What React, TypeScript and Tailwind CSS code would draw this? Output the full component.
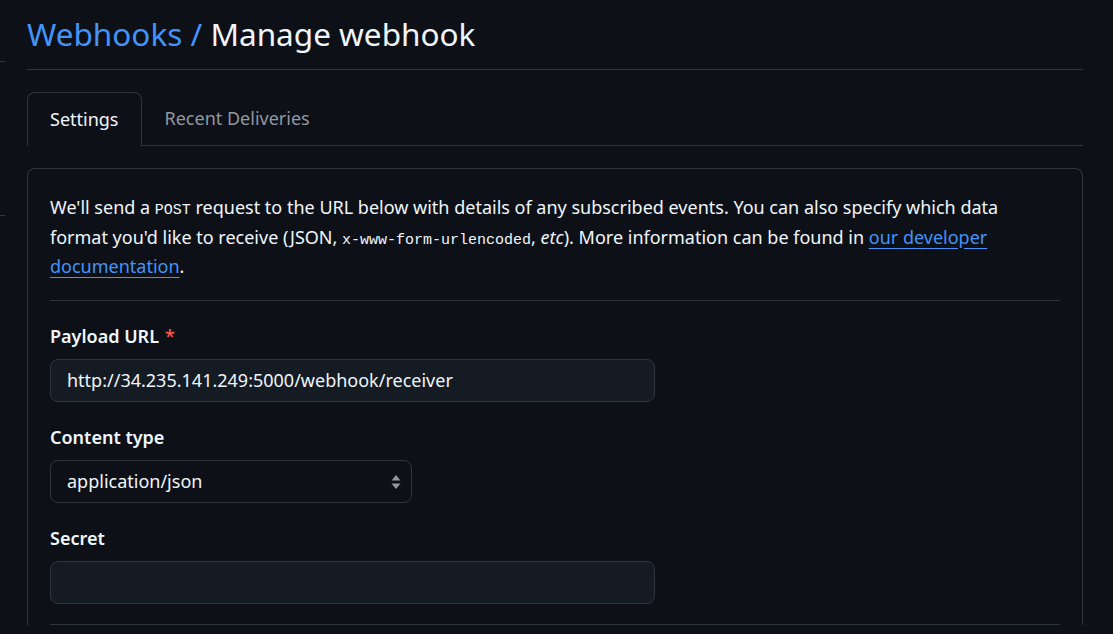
import { useState } from 'react';

function Field({ label, required, children }: { label: string; required?: boolean; children: React.ReactNode }) {
  return (
    <div className="flex flex-col">
      <label className="text-[18px] font-semibold leading-[26px] text-[#f0f6fc]">
        {label}
        {required && <span className="ml-[6px] text-[#f85149]">*</span>}
      </label>
      <div className="mt-[10px]">{children}</div>
    </div>
  );
}

function App() {
  const [url, setUrl] = useState('http://34.235.141.249:5000/webhook/receiver');
  const [secret, setSecret] = useState('');

  return (
    <div className="relative min-h-screen w-full bg-[#0d1117] font-['Noto_Sans',sans-serif] text-[#f0f6fc]">
      {/* leftover sidebar edges */}
      <div className="absolute left-0 top-[61px] h-px w-[5px] bg-[#30363d]" />
      <div className="absolute left-0 top-[215px] h-px w-[5px] bg-[#30363d]" />

      <div className="ml-[27px] w-[1056px]">
        <h1 className="border-b border-[#30363d] pb-[13px] pt-[12px] text-[31.5px] font-normal leading-[44px]">
          <a className="text-[#4493f8]">Webhooks</a>
          <span className="text-[#4493f8]"> / </span>
          Manage webhook
        </h1>

        <div className="mt-[22px] flex border-b border-[#30363d]">
          <div className="-mb-px flex h-[54px] items-center rounded-t-[8px] border border-b-0 border-[#30363d] bg-[#0d1117] px-[22px] text-[18px] text-[#f0f6fc]">
            Settings
          </div>
          <div className="flex h-[53px] items-center px-[23px] text-[18px] text-[#9198a1]">Recent Deliveries</div>
        </div>

        <div className="mt-[22px] rounded-t-[8px] border border-b-0 border-[#30363d] px-[22px] pt-[24px]">
          <p className="text-[18px] leading-[29.5px] text-[#f0f6fc]">
            We'll send a <span className="font-['Liberation_Mono',monospace] text-[15px] leading-none">POST</span> request to the URL below with details of any subscribed events. You can also specify which data format you'd like to receive (JSON,{' '}
            <span className="font-['Liberation_Mono',monospace] text-[15px] leading-none">x-www-form-urlencoded</span>, <em className="leading-none">etc</em>). More information can be found in{' '}
            <a className="text-[#4493f8] underline underline-offset-[4px]">our developer documentation</a>.
          </p>

          <div className="mt-[18px] border-t border-[#30363d] pt-[22px]">
            <div className="flex flex-col gap-[22px]">
              <Field label="Payload URL" required>
                <input
                  value={url}
                  onChange={(e) => setUrl(e.target.value)}
                  className="h-[43px] w-[605px] rounded-[8px] border border-[#30363d] bg-[#151b23] px-[16px] text-[18px] text-[#f0f6fc] outline-none"
                />
              </Field>
              <Field label="Content type">
                <div className="relative w-[362px]">
                  <select className="h-[43px] w-full appearance-none rounded-[8px] border border-[#30363d] bg-[#0d1117] px-[16px] text-[18px] text-[#f0f6fc] outline-none">
                    <option>application/json</option>
                    <option>application/x-www-form-urlencoded</option>
                  </select>
                  <svg className="pointer-events-none absolute right-[10px] top-[14px]" width="12" height="16" viewBox="0 0 12 16" fill="#9198a1">
                    <path d="M6 1 L10.5 6.5 H1.5 Z" />
                    <path d="M6 15 L10.5 9.5 H1.5 Z" />
                  </svg>
                </div>
              </Field>
              <Field label="Secret">
                <input
                  value={secret}
                  onChange={(e) => setSecret(e.target.value)}
                  className="h-[43px] w-[605px] rounded-[8px] border border-[#30363d] bg-[#151b23] px-[16px] text-[18px] text-[#f0f6fc] outline-none"
                />
              </Field>
            </div>
            <div className="mt-[20px] border-t border-[#30363d]" />
          </div>
        </div>
      </div>
    </div>
  );
}

export default App;
